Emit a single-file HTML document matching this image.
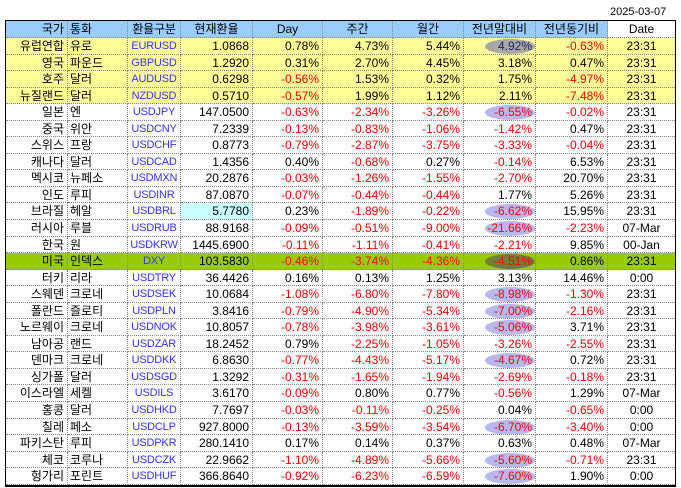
<!DOCTYPE html><html><head><meta charset="utf-8"><style>
body{margin:0;width:681px;height:488px;background:#fff;font-family:"Liberation Sans","Noto Sans CJK KR",sans-serif;font-size:12px;position:relative;overflow:hidden}
.dt{position:absolute;left:610px;top:6px;font-size:11px}
.t{position:absolute;left:5px;top:20px;width:669px;border:1px solid #000;border-bottom:2px solid #000}
.r{display:grid;grid-template-columns:62px 60px 53px 72px 70px 70px 71px 72px 72px 67px;height:16.55px;line-height:16px}
.r>div{border-right:1px dotted #888;border-bottom:1px dotted #888;padding:0 3px;white-space:nowrap;overflow:hidden;position:relative;text-align:right}
.r>div:last-child{border-right:none;text-align:center}
.r>div:nth-child(2){text-align:left;padding-left:2px}
.r>div:nth-child(3){text-align:center;color:#3333ff;font-size:11px;padding:0;letter-spacing:-0.2px}
.h{height:17px}.h>div{background:#99ccff;text-align:center!important;color:#000!important}
.h>div:first-child{text-align:right!important}.h>div:nth-child(2){text-align:left!important}
.h>div:nth-child(3){font-size:12px!important}
.h>div:last-child{background:#fff}
.y>div{background:#ffff99}.g>div{background:#99cc00}
.n{color:#f00}
.e::before{content:"";position:absolute;right:0px;top:1px;width:50px;height:15px;border-radius:50%;background:#b8b8f0;z-index:0}
.e span{position:relative;z-index:1}
.eg::before{background:#a8a8a8}.ed::before{background:#6f7f3a}
.cb{background:#ccffff!important}
</style></head><body>
<div class="dt">2025-03-07</div>
<div class="t">
<div class="r h"><div>국가</div><div>통화</div><div>환율구분</div><div>현재환율</div><div>Day</div><div>주간</div><div>월간</div><div>전년말대비</div><div>전년동기비</div><div>Date</div></div>
<div class="r y"><div>유럽연합</div><div>유로</div><div>EURUSD</div><div>1.0868</div><div>0.78%</div><div>4.73%</div><div>5.44%</div><div class="e eg"><span style="color:#202060">4.92%</span></div><div class="n">-0.63%</div><div>23:31</div></div>
<div class="r y"><div>영국</div><div>파운드</div><div>GBPUSD</div><div>1.2920</div><div>0.31%</div><div>2.70%</div><div>4.45%</div><div>3.18%</div><div>0.47%</div><div>23:31</div></div>
<div class="r y"><div>호주</div><div>달러</div><div>AUDUSD</div><div>0.6298</div><div class="n">-0.56%</div><div>1.53%</div><div>0.32%</div><div>1.75%</div><div class="n">-4.97%</div><div>23:31</div></div>
<div class="r y"><div>뉴질랜드</div><div>달러</div><div>NZDUSD</div><div>0.5710</div><div class="n">-0.57%</div><div>1.99%</div><div>1.12%</div><div>2.11%</div><div class="n">-7.48%</div><div>23:31</div></div>
<div class="r"><div>일본</div><div>엔</div><div>USDJPY</div><div>147.0500</div><div class="n">-0.63%</div><div class="n">-2.34%</div><div class="n">-3.26%</div><div class="n e"><span>-6.55%</span></div><div class="n">-0.02%</div><div>23:31</div></div>
<div class="r"><div>중국</div><div>위안</div><div>USDCNY</div><div>7.2339</div><div class="n">-0.13%</div><div class="n">-0.83%</div><div class="n">-1.06%</div><div class="n">-1.42%</div><div>0.47%</div><div>23:31</div></div>
<div class="r"><div>스위스</div><div>프랑</div><div>USDCHF</div><div>0.8773</div><div class="n">-0.79%</div><div class="n">-2.87%</div><div class="n">-3.75%</div><div class="n">-3.33%</div><div class="n">-0.04%</div><div>23:31</div></div>
<div class="r"><div>캐나다</div><div>달러</div><div>USDCAD</div><div>1.4356</div><div>0.40%</div><div class="n">-0.68%</div><div>0.27%</div><div class="n">-0.14%</div><div>6.53%</div><div>23:31</div></div>
<div class="r"><div>멕시코</div><div>뉴페소</div><div>USDMXN</div><div>20.2876</div><div class="n">-0.03%</div><div class="n">-1.26%</div><div class="n">-1.55%</div><div class="n">-2.70%</div><div>20.70%</div><div>23:31</div></div>
<div class="r"><div>인도</div><div>루피</div><div>USDINR</div><div>87.0870</div><div class="n">-0.07%</div><div class="n">-0.44%</div><div class="n">-0.44%</div><div>1.77%</div><div>5.26%</div><div>23:31</div></div>
<div class="r"><div>브라질</div><div>헤알</div><div>USDBRL</div><div class="cb">5.7780</div><div>0.23%</div><div class="n">-1.89%</div><div class="n">-0.22%</div><div class="n e"><span>-6.62%</span></div><div>15.95%</div><div>23:31</div></div>
<div class="r"><div>러시아</div><div>루블</div><div>USDRUB</div><div>88.9168</div><div class="n">-0.09%</div><div class="n">-0.51%</div><div class="n">-9.00%</div><div class="n e"><span>-21.66%</span></div><div class="n">-2.23%</div><div>07-Mar</div></div>
<div class="r"><div>한국</div><div>원</div><div>USDKRW</div><div>1445.6900</div><div class="n">-0.11%</div><div class="n">-1.11%</div><div class="n">-0.41%</div><div class="n">-2.21%</div><div>9.85%</div><div>00-Jan</div></div>
<div class="r g"><div>미국</div><div>인덱스</div><div>DXY</div><div>103.5830</div><div class="n">-0.46%</div><div class="n">-3.74%</div><div class="n">-4.36%</div><div class="n e ed"><span>-4.51%</span></div><div>0.86%</div><div>23:31</div></div>
<div class="r"><div>터키</div><div>리라</div><div>USDTRY</div><div>36.4426</div><div>0.16%</div><div>0.13%</div><div>1.25%</div><div>3.13%</div><div>14.46%</div><div>0:00</div></div>
<div class="r"><div>스웨덴</div><div>크로네</div><div>USDSEK</div><div>10.0684</div><div class="n">-1.08%</div><div class="n">-6.80%</div><div class="n">-7.80%</div><div class="n e"><span>-8.98%</span></div><div class="n">-1.30%</div><div>23:31</div></div>
<div class="r"><div>폴란드</div><div>즐로티</div><div>USDPLN</div><div>3.8416</div><div class="n">-0.79%</div><div class="n">-4.90%</div><div class="n">-5.34%</div><div class="n e"><span>-7.00%</span></div><div class="n">-2.16%</div><div>23:31</div></div>
<div class="r"><div>노르웨이</div><div>크로네</div><div>USDNOK</div><div>10.8057</div><div class="n">-0.78%</div><div class="n">-3.98%</div><div class="n">-3.61%</div><div class="n e"><span>-5.06%</span></div><div>3.71%</div><div>23:31</div></div>
<div class="r"><div>남아공</div><div>랜드</div><div>USDZAR</div><div>18.2452</div><div>0.79%</div><div class="n">-2.25%</div><div class="n">-1.05%</div><div class="n">-3.26%</div><div class="n">-2.55%</div><div>23:31</div></div>
<div class="r"><div>덴마크</div><div>크로네</div><div>USDDKK</div><div>6.8630</div><div class="n">-0.77%</div><div class="n">-4.43%</div><div class="n">-5.17%</div><div class="n e"><span>-4.67%</span></div><div>0.72%</div><div>23:31</div></div>
<div class="r"><div>싱가폴</div><div>달러</div><div>USDSGD</div><div>1.3292</div><div class="n">-0.31%</div><div class="n">-1.65%</div><div class="n">-1.94%</div><div class="n">-2.69%</div><div class="n">-0.18%</div><div>23:31</div></div>
<div class="r"><div>이스라엘</div><div>세켈</div><div>USDILS</div><div>3.6170</div><div class="n">-0.09%</div><div>0.80%</div><div>0.77%</div><div class="n">-0.56%</div><div>1.29%</div><div>07-Mar</div></div>
<div class="r"><div>홍콩</div><div>달러</div><div>USDHKD</div><div>7.7697</div><div class="n">-0.03%</div><div class="n">-0.11%</div><div class="n">-0.25%</div><div>0.04%</div><div class="n">-0.65%</div><div>0:00</div></div>
<div class="r"><div>칠레</div><div>페소</div><div>USDCLP</div><div>927.8000</div><div class="n">-0.13%</div><div class="n">-3.59%</div><div class="n">-3.54%</div><div class="n e"><span>-6.70%</span></div><div class="n">-3.40%</div><div>0:00</div></div>
<div class="r"><div>파키스탄</div><div>루피</div><div>USDPKR</div><div>280.1410</div><div>0.17%</div><div>0.14%</div><div>0.37%</div><div>0.63%</div><div>0.48%</div><div>07-Mar</div></div>
<div class="r"><div>체코</div><div>코루나</div><div>USDCZK</div><div>22.9662</div><div class="n">-1.10%</div><div class="n">-4.89%</div><div class="n">-5.66%</div><div class="n e"><span>-5.60%</span></div><div class="n">-0.71%</div><div>23:31</div></div>
<div class="r"><div>헝가리</div><div>포린트</div><div>USDHUF</div><div>366.8640</div><div class="n">-0.92%</div><div class="n">-6.23%</div><div class="n">-6.59%</div><div class="n e"><span>-7.60%</span></div><div>1.90%</div><div>0:00</div></div>
</div>
</body></html>
